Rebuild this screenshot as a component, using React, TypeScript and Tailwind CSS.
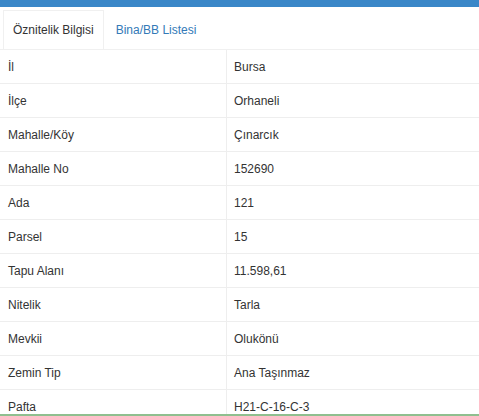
const rows: [string, string][] = [
  ["İl", "Bursa"],
  ["İlçe", "Orhaneli"],
  ["Mahalle/Köy", "Çınarcık"],
  ["Mahalle No", "152690"],
  ["Ada", "121"],
  ["Parsel", "15"],
  ["Tapu Alanı", "11.598,61"],
  ["Nitelik", "Tarla"],
  ["Mevkii", "Olukönü"],
  ["Zemin Tip", "Ana Taşınmaz"],
  ["Pafta", "H21-C-16-C-3"],
];

export default function App() {
  return (
    <div
      className="w-[479px] h-[416px] overflow-hidden bg-white text-[12px] text-[#333]"
      style={{ fontFamily: '"Liberation Sans", Arial, sans-serif' }}
    >
      <div className="h-[7px] bg-[#3a87c8]" />
      <div className="flex px-[3px] pt-[3px] border-b border-[#f0f0f0]">
        <div className="px-[9px] h-[39px] flex items-center border border-b-0 border-[#f0f0f0] bg-white -mb-px">
          Öznitelik Bilgisi
        </div>
        <div className="ml-[2px] px-[10px] h-[39px] flex items-center text-[#337ab7]">
          Bina/BB Listesi
        </div>
      </div>
      <div className="h-[366px] overflow-hidden border-b-2 border-[#8fbf8f]">
        {rows.map(([k, v]) => (
          <div key={k} className="flex h-[34px] border-b border-[#eee]">
            <div className="w-[227px] shrink-0 pl-[8px] flex items-center border-r border-[#eee]">
              {k}
            </div>
            <div className="pl-[7px] flex items-center">{v}</div>
          </div>
        ))}
      </div>
    </div>
  );
}
